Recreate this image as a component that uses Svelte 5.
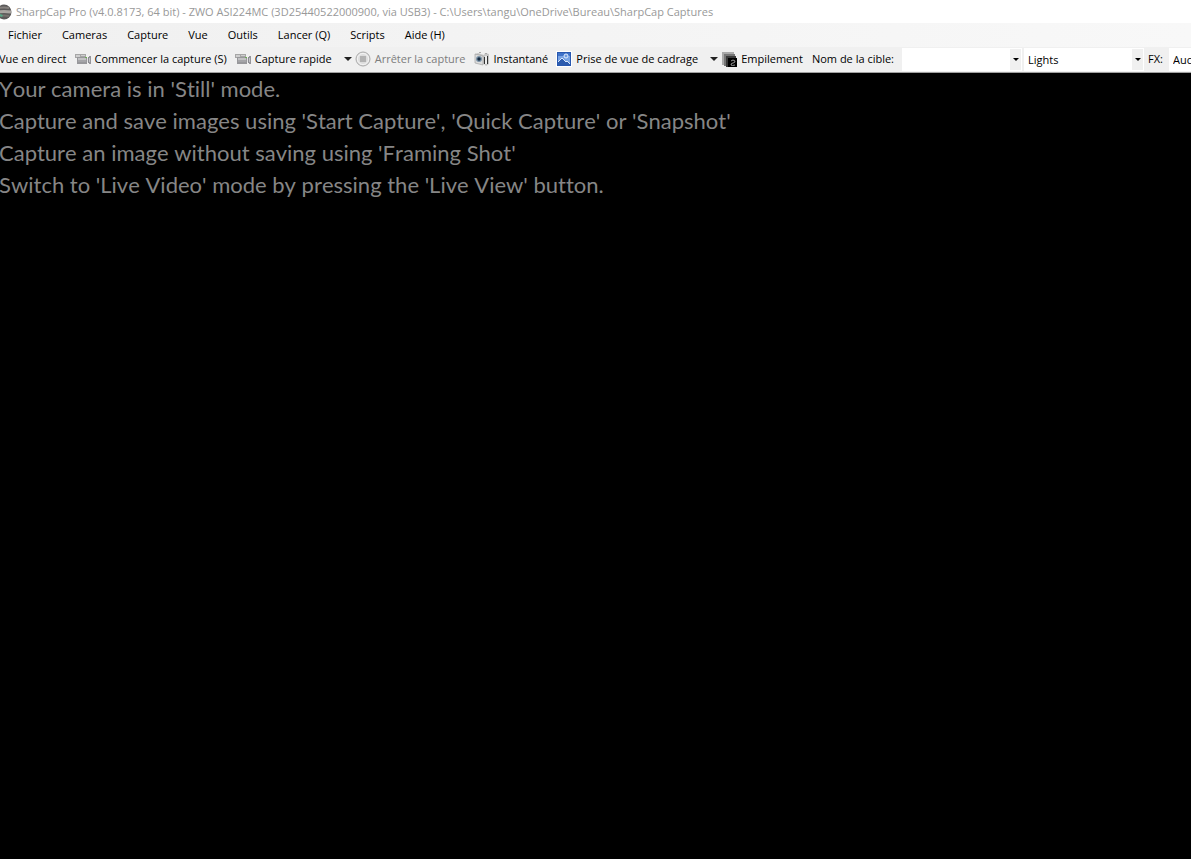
<script lang="ts">
  const menus = ['Fichier', 'Cameras', 'Capture', 'Vue', 'Outils', 'Lancer (Q)', 'Scripts', 'Aide (H)'];

  const messages = [
    "Your camera is in 'Still' mode.",
    "Capture and save images using 'Start Capture', 'Quick Capture' or 'Snapshot'",
    "Capture an image without saving using 'Framing Shot'",
    "Switch to 'Live Video' mode by pressing the 'Live View' button."
  ];

  let target = $state('');
  let frameType = $state('Lights');
  let effect = $state('Aucun');
</script>

{#snippet camcorder()}
  <svg class="icon" viewBox="0 0 16 16" aria-hidden="true">
    <path d="M0 3h11v4H0z" fill="#a6a6a6" />
    <path d="M1 4h4v2H1zM6 4h4v1H6z" fill="#cfcfcf" />
    <path d="M2 6h10v7H2z" fill="#98989b" />
    <path d="M3 7h8v2H3z" fill="#c2c2c4" />
    <path d="M3 9h8v2H3z" fill="#a5a5a8" />
    <path d="M12 7h1v4h-1z" fill="#e2e2e2" />
    <path d="M13 6h1v6h-1z" fill="#8b8b90" />
    <path d="M14 5h2v8h-2z" fill="#96969b" />
    <path d="M14 7h1v4h-1z" fill="#c4c4c8" />
    <path d="M10 6h2v1h-2z" fill="#6cab55" />
  </svg>
{/snippet}

{#snippet arrow()}
  <svg class="arrow" viewBox="0 0 8 4" aria-hidden="true">
    <path d="M0 0h8L4 4z" fill="#222" />
  </svg>
{/snippet}

<div class="window">
  <header class="titlebar">
    <svg class="logo" viewBox="0 0 16 16" aria-hidden="true">
      <circle cx="8" cy="8" r="7.500" fill="#5c5a5a" />
      <path d="M3 4q5-1 10 0" stroke="#85817e" stroke-width="2" fill="none" />
      <path d="M1 8q7-1 14 0" stroke="#aaa5a1" stroke-width="3" fill="none" />
      <path d="M3 12q5-1 10 0" stroke="#77726f" stroke-width="2" fill="none" />
      <path d="M4 10l3 1-1 2-3-1z" fill="#57a887" />
    </svg>
    <h1>SharpCap Pro (v4.0.8173, 64 bit) - ZWO ASI224MC (3D25440522000900, via USB3) - C:\Users\tangu\OneDrive\Bureau\SharpCap Captures</h1>
  </header>

  <nav class="menubar">
    {#each menus as menu}
      <button type="button">{menu}</button>
    {/each}
  </nav>

  <div class="toolbar">
    <div class="actions">
      <button type="button">Vue en direct</button>
      <button type="button">{@render camcorder()}Commencer la capture (S)</button>
      <button type="button">{@render camcorder()}Capture rapide{@render arrow()}</button>
      <button type="button" disabled>
        <svg class="icon" viewBox="0 0 16 16" aria-hidden="true">
          <circle cx="8" cy="8" r="7" fill="#e4e4e4" stroke="#aaa" />
          <circle cx="8" cy="8" r="5.500" fill="#ddd" stroke="#f4f4f4" />
          <path d="M5 5h6v6H5z" fill="#b2b2b2" />
        </svg>
        Arrêter la capture
      </button>
      <button type="button">
        <svg class="icon" viewBox="0 0 16 16" aria-hidden="true">
          <path d="M1 3l3-1 6 2 1-2 4 1v10l-3 2-2-2-9-1z" fill="#c6c6c6" />
          <path d="M1 3l8 2v9l-8-2z" fill="#ddd" stroke="#999" stroke-width=".6" />
          <circle cx="5" cy="8" r="3" fill="#7b93a8" />
          <circle cx="5" cy="8" r="1.700" fill="#182c42" />
          <path d="M10 6h1v7h-1zM13 5h1v8h-1z" fill="#333" />
          <path d="M11 5h2v8h-2z" fill="#eee" />
          <path d="M5 1h2v1H5zM11 2h2v1h-2z" fill="#aaa" />
        </svg>
        Instantané
      </button>
      <button type="button">
        <svg class="icon" viewBox="0 0 16 16" aria-hidden="true">
          <path d="M0 0h16v16H0z" fill="#fff" />
          <path d="M1 1h14v14H1z" fill="#2858b0" />
          <path d="M2 2h12v12H2z" fill="#78a3e4" />
          <path d="M2 2h12v3H2z" fill="#3f72c8" />
          <path d="M2 11l4-4 4 4 1-1 3 3v1H2z" fill="#2c5bae" />
          <path d="M2 11l4-4 4 4 1-1 3 3" fill="none" stroke="#d9e8fb" />
          <circle cx="10" cy="5" r="2" fill="#6d9ae0" stroke="#e3eefc" />
        </svg>
        Prise de vue de cadrage{@render arrow()}
      </button>
      <button type="button">
        <svg class="icon" viewBox="0 0 16 16" aria-hidden="true">
          <path d="M1 1h12v13H1z" fill="#aaa" />
          <path d="M3 3h11v12H3z" fill="#777" />
          <path d="M5 5h10v11H5z" fill="#3a3a3a" />
          <path d="M7 7h9v9H7z" fill="#000" />
          <path d="M10 10q2-2 4 0 0 2-2 2-2 0-2 2 1 1 4 0" fill="none" stroke="#999" />
        </svg>
        Empilement
      </button>
    </div>

    <label class="caption" for="target">Nom de la cible:</label>
    <div class="combo">
      <input id="target" type="text" bind:value={target} />
      <button type="button" class="drop" aria-label="Noms récents">
        <svg viewBox="0 0 6 3" aria-hidden="true"><path d="M0 0h6L3 3z" /></svg>
      </button>
    </div>
    <div class="combo">
      <select aria-label="Type d'image" bind:value={frameType}>
        <option>Lights</option>
        <option>Darks</option>
        <option>Flats</option>
      </select>
      <span class="drop">
        <svg viewBox="0 0 6 3" aria-hidden="true"><path d="M0 0h6L3 3z" /></svg>
      </span>
    </div>
    <label class="caption fx" for="fx">FX:</label>
    <div class="combo">
      <select id="fx" bind:value={effect}>
        <option>Aucun</option>
      </select>
    </div>
  </div>

  <main class="view">
    {#each messages as message}
      <p>{message}</p>
    {/each}
  </main>
</div>

<style>
  :global(body) {
    margin: 0;
    background: #000;
  }

  .window {
    display: flex;
    flex-direction: column;
    min-height: 100vh;
    overflow: hidden;
    font-family: 'Open Sans', 'Noto Sans', sans-serif;
    font-size: 11px;
    line-height: 16px;
    color: #000;
    white-space: nowrap;
  }

  button,
  input,
  select {
    margin: 0;
    padding: 0;
    border: 0;
    border-radius: 0;
    background: none;
    color: inherit;
    font: inherit;
    white-space: nowrap;
  }

  .titlebar {
    display: flex;
    align-items: center;
    gap: 4px;
    height: 23px;
    margin-left: -4px;
    background: #fff;
    color: #999;
  }

  .logo {
    width: 16px;
    height: 16px;
    flex: none;
  }

  h1 {
    margin: 0;
    font-size: 11px;
    font-weight: 400;
  }

  .menubar {
    display: flex;
    align-items: center;
    gap: 20px;
    height: 24px;
    padding-left: 8px;
    background: linear-gradient(90deg, #f0f0f0, #f8f8f8);
  }

  .toolbar {
    display: flex;
    align-items: center;
    height: 25px;
    border-bottom: 1px solid #a0a0a0;
    background: #f0f0f0;
  }

  .actions {
    display: flex;
    gap: 8px;
    margin-left: -1px;
    padding-bottom: 2px;
  }

  .actions button {
    display: flex;
    align-items: center;
    gap: 4px;
  }

  .actions button:disabled {
    color: #7d7d7d;
  }

  .icon {
    width: 16px;
    height: 16px;
    flex: none;
  }

  .arrow {
    width: 8px;
    height: 4px;
    margin-left: 8px;
    margin-right: -5px;
    flex: none;
  }

  .caption {
    margin-left: 9px;
    margin-right: 8px;
    padding-bottom: 2px;
  }

  .caption.fx {
    margin-left: 2px;
    margin-right: 6px;
  }

  .combo {
    display: flex;
    flex: none;
    width: 120px;
    height: 23px;
    margin-right: 2px;
    background: #fff;
  }

  .combo input,
  .combo select {
    flex: 1;
    min-width: 0;
    padding-left: 4px;
    appearance: none;
    outline: none;
  }

  .drop {
    display: flex;
    align-items: center;
    justify-content: center;
    width: 11px;
    margin: 1px;
    background: #f0f0f0;
    pointer-events: none;
  }

  .drop svg {
    width: 6px;
    height: 3px;
  }

  .view {
    flex: 1;
    margin-left: -1px;
    background: #000;
    color: #868686;
    font-family: Lato, 'Open Sans', sans-serif;
    font-size: 22px;
    font-kerning: none;
    font-variant-ligatures: none;
    line-height: 32px;
  }

  .view p {
    margin: 0;
  }
</style>
